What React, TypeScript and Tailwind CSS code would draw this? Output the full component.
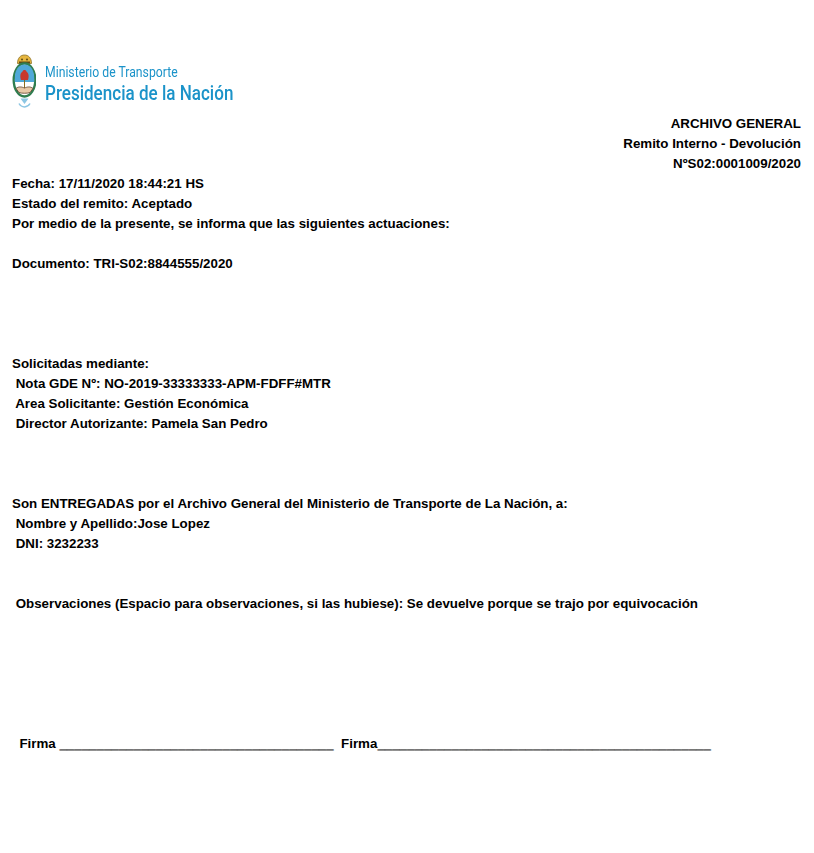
function Crest() {
  return (
    <svg width="24" height="55" viewBox="0 0 24 55" className="shrink-0 blur-[0.4px]">
      <path d="M5.5 9.5 C5.5 4 8.5 1 12.5 1 C16.5 1 19.5 4 19.5 9.5 Z" fill="#e6b63f" stroke="#8a6d1f" strokeWidth="0.8" />
      <circle cx="10" cy="5.5" r="1" fill="#5f4a14" />
      <circle cx="15" cy="5.5" r="1" fill="#5f4a14" />
      <rect x="7" y="7.5" width="11" height="2" fill="#5f4a14" />
      <ellipse cx="12.5" cy="26" rx="10.8" ry="16.5" fill="#fff" stroke="#2f7d4f" strokeWidth="2.4" />
      <path d="M2.8 28 V24 C2.8 15.5 7 10.5 12.5 10.5 C18 10.5 22.2 15.5 22.2 24 V28 Z" fill="#4fa8d8" />
      <path d="M12.5 36 V24" stroke="#8a6d1f" strokeWidth="1" />
      <path d="M9 26 C7.6 22 8.6 18.5 10.4 17.8 C10.8 15.4 14.2 15.4 14.6 17.8 C16.4 18.8 17.4 22 16 26 Z" fill="#c8372d" />
      <path d="M4 34.5 C7 32 10 33 12.5 34 C15 33 18 32 21 34.5 L18 38.5 C16 39.5 9 39.5 7 38.5 Z" fill="#e8c9a8" stroke="#5b3f28" strokeWidth="0.8" />
      <path d="M8.5 44.5 H16.5 L12.5 50 Z" fill="#8cc6e3" />
      <path d="M7 49.5 C9.5 54 15.5 54 18 49.5" stroke="#8cc6e3" strokeWidth="1.5" fill="none" />
    </svg>
  );
}

function Line({ children, className = "" }: { children: React.ReactNode; className?: string }) {
  return <p className={`h-5 leading-5 whitespace-pre ${className}`}>{children}</p>;
}

export default function App() {
  return (
    <div className="min-h-[853px] w-[814px] bg-white text-[13.33px] font-bold text-black font-['Liberation_Sans',Arial,sans-serif] pt-[54px]">
      <div className="flex items-start gap-[9px] pl-[12px] h-[60px]">
        <Crest />
        <div className="mt-[10px] font-['Roboto','Open_Sans',sans-serif] font-normal text-[#1b93c9] whitespace-nowrap">
          <div className="text-[14.5px] leading-[17px] origin-left scale-x-[0.843]">Ministerio de Transporte</div>
          <div className="text-[21px] leading-[25px] font-medium origin-left scale-x-[0.812]">Presidencia de la Nación</div>
        </div>
      </div>
      <div className="text-right pr-[13px]">
        <Line>ARCHIVO GENERAL</Line>
        <Line>Remito Interno - Devolución</Line>
        <Line>NºS02:0001009/2020</Line>
      </div>
      <div className="pl-[12px]">
        <Line>Fecha: 17/11/2020 18:44:21 HS</Line>
        <Line>Estado del remito: Aceptado</Line>
        <Line>Por medio de la presente, se informa que las siguientes actuaciones:</Line>
        <Line className="mt-5">Documento: TRI-S02:8844555/2020</Line>
        <Line className="mt-[80px]">Solicitadas mediante:</Line>
        <Line> Nota GDE Nº: NO-2019-33333333-APM-FDFF#MTR</Line>
        <Line> Area Solicitante: Gestión Económica</Line>
        <Line> Director Autorizante: Pamela San Pedro</Line>
        <Line className="mt-[60px]">Son ENTREGADAS por el Archivo General del Ministerio de Transporte de La Nación, a:</Line>
        <Line> Nombre y Apellido:Jose Lopez</Line>
        <Line> DNI: 3232233</Line>
        <Line className="mt-10"> Observaciones (Espacio para observaciones, si las hubiese): Se devuelve porque se trajo por equivocación</Line>
        <Line className="mt-[120px]">  Firma <span className="[text-shadow:0_1px_0_#333]">_____________________________________</span>  Firma<span className="[text-shadow:0_1px_0_#333]">_____________________________________________</span></Line>
      </div>
    </div>
  );
}
